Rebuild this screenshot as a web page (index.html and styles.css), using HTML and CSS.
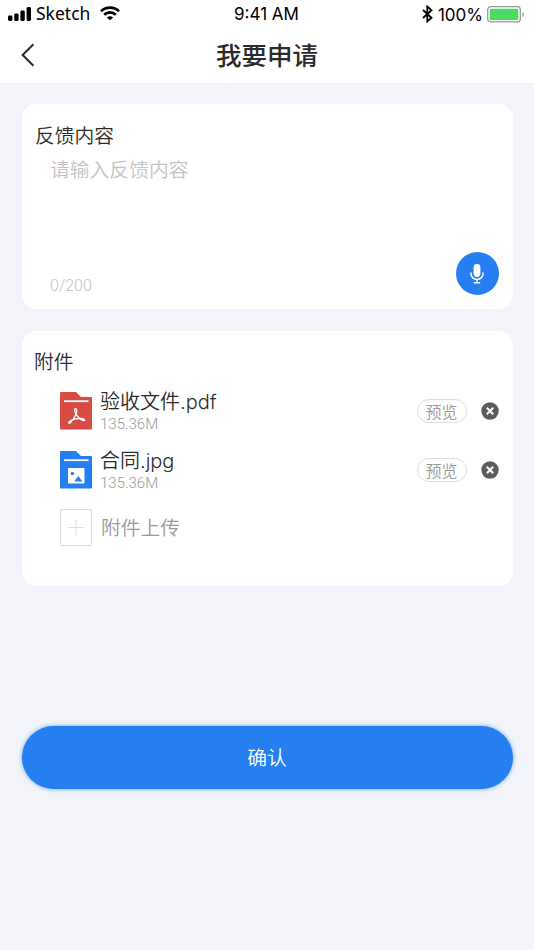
FILE: index.html
```html
<!DOCTYPE html>
<html lang="zh-CN">
<head>
    <meta charset="UTF-8">
    <meta name="viewport" content="width=device-width, initial-scale=1.0">
    <title>我要申请</title>
    <link rel="stylesheet" href="styles.css">
</head>
<body>
    <header class="header">
        <div class="status-bar">
            <div class="status-left">
                <svg class="signal" width="24" height="15" viewBox="0 0 24 15">
                    <rect x="0" y="8.5" width="4.4" height="5.5" rx="1.4"/>
                    <rect x="6.2" y="6.5" width="4.4" height="7.5" rx="1.4"/>
                    <rect x="12.4" y="3.5" width="4.4" height="10.5" rx="1.4"/>
                    <rect x="18.6" y="0" width="4.4" height="14" rx="1.4"/>
                </svg>
                <span class="carrier">Sketch</span>
                <svg class="wifi" width="20" height="15" viewBox="0 0 20 15">
                    <g fill="none" stroke="#000" stroke-width="2.7">
                        <path d="M1 5.2a12.9 12.9 0 0 1 18 0"/>
                        <path d="M4.2 8.8a8.3 8.3 0 0 1 11.6 0"/>
                    </g>
                    <path d="M10 14.3 6.9 11.6a4.8 4.8 0 0 1 6.2 0z"/>
                </svg>
            </div>
            <span class="time">9:41 AM</span>
            <div class="status-right">
                <svg class="bluetooth" width="11" height="18" viewBox="0 0 11 18">
                    <path d="M1 5l8.5 7.8-4.2 3.7V1.5l4.2 3.7L1 13" fill="none" stroke="#000" stroke-width="1.8"/>
                </svg>
                <span class="percent">100%</span>
                <svg class="battery" width="38" height="17" viewBox="0 0 38 17">
                    <rect x=".7" y=".7" width="32.6" height="15.2" rx="3" fill="#fff" stroke="#999" stroke-width="1.3"/>
                    <rect x="2.7" y="2.7" width="28.6" height="11.2" rx="1" fill="#4cd964"/>
                    <path d="M35.4 6v5c2-.9 2-4.1 0-5z" fill="#999"/>
                </svg>
            </div>
        </div>
        <div class="nav-bar">
            <svg class="back" width="14" height="24" viewBox="0 0 14 24">
                <path d="M12.4 1.2 1.6 12l10.8 10.8" fill="none" stroke="#2b2b2b" stroke-width="2"/>
            </svg>
            <h1>我要申请</h1>
        </div>
    </header>

    <main class="container">
        <section class="card feedback">
            <h2>反馈内容</h2>
            <p class="placeholder">请输入反馈内容</p>
            <div class="feedback-footer">
                <span class="counter">0/200</span>
                <button class="mic" type="button" aria-label="语音输入">
                    <svg width="14" height="20" viewBox="0 0 14 20">
                        <rect x="3.6" y="0" width="6.8" height="13" rx="3.4" fill="#fff"/>
                        <path d="M1 8.5v1.6a6 5.4 0 0 0 12 0V8.5M7 15.5v3M3.8 18.8h6.4" fill="none" stroke="#fff" stroke-width="1.5"/>
                    </svg>
                </button>
            </div>
        </section>

        <section class="card attachments">
            <h2>附件</h2>
            <ul class="file-list">
                <li class="file">
                    <svg class="file-icon" width="32" height="38" viewBox="0 0 32 38">
                        <path d="M1 0h15l5 5h10a1 1 0 0 1 1 1v30.500a1 1 0 0 1-1 1H1a1 1 0 0 1-1-1V1a1 1 0 0 1 1-1z" fill="#d94c43"/>
                        <path d="M4 9.2h24.5" stroke="#fff" stroke-width="1.8"/>
                        <g fill="none" stroke="#fff" stroke-width="1.3" stroke-linejoin="round">
                            <path d="M15.5 16.7c1.7 0 1.5 2.8.5 5.2-1.3-2.5-2-5.2-.5-5.2z"/>
                            <path d="M16 21.9c1 2 2.3 3.5 3.9 4.6-2.4 0-4.9.5-7.2 1.3 1.5-1.9 2.5-3.9 3.3-5.9z"/>
                            <path d="M12.7 27.8c-1.5 2.6-3.1 4-3.9 3.2-.8-.9 1.1-2.3 3.9-3.2zM19.9 26.5c2.4.1 5 .6 4.800 1.6-.3 1.100-3.100.2-4.800-1.600z"/>
                        </g>
                    </svg>
                    <div class="file-info">
                        <div class="file-name">验收文件.pdf</div>
                        <div class="file-size">135.36M</div>
                    </div>
                    <button class="preview" type="button">预览</button>
                    <button class="remove" type="button" aria-label="删除">
                        <svg width="18" height="18" viewBox="0 0 18 18">
                            <circle cx="9" cy="9" r="8.7" fill="#5c5c5c"/>
                            <path d="M5.8 5.8l6.4 6.4M12.2 5.8l-6.4 6.4" stroke="#fff" stroke-width="2"/>
                        </svg>
                    </button>
                </li>
                <li class="file">
                    <svg class="file-icon" width="32" height="38" viewBox="0 0 32 38">
                        <path d="M1 0h15l5 5h10a1 1 0 0 1 1 1v30.5a1 1 0 0 1-1 1H1a1 1 0 0 1-1-1V1a1 1 0 0 1 1-1z" fill="#257ff0"/>
                        <path d="M4 9.2h24.5" stroke="#fff" stroke-width="1.8"/>
                        <rect x="8" y="17" width="16.5" height="15.5" rx="1" fill="#fff"/>
                        <circle cx="12.4" cy="22.5" r="1.7" fill="#257ff0"/>
                        <path d="M14.3 30.5l4-5.5 4.2 5.5z" fill="#257ff0"/>
                    </svg>
                    <div class="file-info">
                        <div class="file-name">合同.jpg</div>
                        <div class="file-size">135.36M</div>
                    </div>
                    <button class="preview" type="button">预览</button>
                    <button class="remove" type="button" aria-label="删除">
                        <svg width="18" height="18" viewBox="0 0 18 18">
                            <circle cx="9" cy="9" r="8.7" fill="#5c5c5c"/>
                            <path d="M5.8 5.8l6.4 6.4M12.2 5.8l-6.4 6.4" stroke="#fff" stroke-width="2"/>
                        </svg>
                    </button>
                </li>
            </ul>
            <div class="upload">
                <svg width="32" height="38" viewBox="0 0 32 38">
                    <path d="M.5.5h31v36H.5zM8 18.5h16M16 10.5v16" fill="none" stroke="#dedede"/>
                </svg>
                <span>附件上传</span>
            </div>
        </section>

        <button class="submit" type="button">确认</button>
    </main>
</body>
</html>
```
FILE: styles.css
```css
:root {
    --primary: #257ff0;
    --background: #f3f4fa;
    --text: #2b2b2b;
    --muted: #999;
}

* {
    box-sizing: border-box;
    margin: 0;
    padding: 0;
}

body {
    background: var(--background);
    color: var(--text);
    font-family: 'Noto Sans CJK SC', sans-serif;
    font-weight: 350;
    min-height: 100vh;
}

svg {
    display: block;
    flex-shrink: 0;
}

button {
    border: none;
    font: inherit;
    cursor: pointer;
}

/* Header */
.header {
    height: 83px;
    background: #fff;
}

.status-bar {
    height: 27px;
    display: grid;
    grid-template-columns: 1fr auto 1fr;
    align-items: center;
    padding: 0 9px 0 8px;
    color: #000;
    font-weight: 400;
}

.status-left,
.status-right {
    display: flex;
    align-items: center;
}

.status-right {
    justify-content: flex-end;
}

.signal {
    margin-top: -1px;
}

.carrier {
    font-family: 'Noto Sans', sans-serif;
    font-size: 17.5px;
    line-height: 24px;
    margin: -3px 10px 0 4px;
}

.wifi {
    margin-top: -2px;
}

.time {
    font-family: Inter, sans-serif;
    font-size: 17px;
    line-height: 27px;
}

.percent {
    font-family: Inter, sans-serif;
    font-size: 17px;
    line-height: 27px;
    margin: 2px 4px 0 5px;
}

.bluetooth {
    margin-top: -2px;
}

.battery {
    margin-top: -1px;
}

.nav-bar {
    height: 54px;
    display: grid;
    grid-template-columns: 1fr auto 1fr;
    align-items: center;
    padding: 0 21px;
}

.back {
    margin-top: 2px;
}

h1 {
    font-size: 25.5px;
    font-weight: 500;
    line-height: 54px;
}

/* Cards */
.container {
    padding: 21px 21.5px 0;
}

.card {
    background: #fff;
    border-radius: 14px;
    padding: 16px 14px 0 13.5px;
    margin-bottom: 22px;
}

h2 {
    font-size: 19.8px;
    font-weight: 350;
    line-height: 30px;
}

.feedback {
    height: 205px;
    display: flex;
    flex-direction: column;
}

.placeholder {
    color: #c4c4c4;
    font-size: 19.8px;
    line-height: 30px;
    margin: 4px 0 0 15px;
}

.feedback-footer {
    display: flex;
    justify-content: space-between;
    align-items: flex-end;
    margin: auto 0 14px 15px;
}

.counter {
    color: #c4c4c4;
    font-family: Roboto, sans-serif;
    font-size: 16px;
    line-height: 18px;
}

.mic {
    width: 43px;
    height: 43px;
    border-radius: 50%;
    background: var(--primary);
    display: flex;
    align-items: center;
    justify-content: center;
}

.attachments {
    height: 255px;
    padding-top: 15px;
}

.attachments h2 {
    margin-left: -1px;
}

.file-list {
    list-style: none;
    margin-top: 12px;
}

.file {
    height: 58.5px;
    display: flex;
    align-items: flex-start;
    padding-left: 25px;
}

.file-icon {
    margin-top: 4px;
}

.file-info {
    flex: 1;
    margin-left: 8px;
}

.file-name {
    font-family: Inter, 'Noto Sans CJK SC', sans-serif;
    font-size: 20px;
    line-height: 29px;
}

.file-size {
    color: var(--muted);
    font-family: Roboto, sans-serif;
    font-size: 15px;
    line-height: 18px;
    margin-top: -2px;
}

.preview {
    width: 50px;
    height: 24px;
    margin-top: 11px;
    border: 1px solid #ddd;
    border-radius: 12px;
    background: #fff;
    color: var(--muted);
    font-size: 16px;
    line-height: 20px;
}

.remove {
    margin: 14px 0 0 14px;
    background: none;
}

.upload {
    display: flex;
    align-items: center;
    gap: 9px;
    margin-top: 4px;
    padding-left: 25px;
    color: var(--muted);
    font-size: 19.8px;
    line-height: 36px;
}

.upload span {
    margin-top: -2px;
}

.submit {
    display: block;
    width: 100%;
    height: 63px;
    margin-top: 140px;
    border-radius: 32px;
    background: var(--primary);
    box-shadow: 0 0 4px rgba(37, 127, 240, 0.7);
    color: #fff;
    font-size: 19.8px;
    line-height: 61px;
    padding-bottom: 2px;
}
```
